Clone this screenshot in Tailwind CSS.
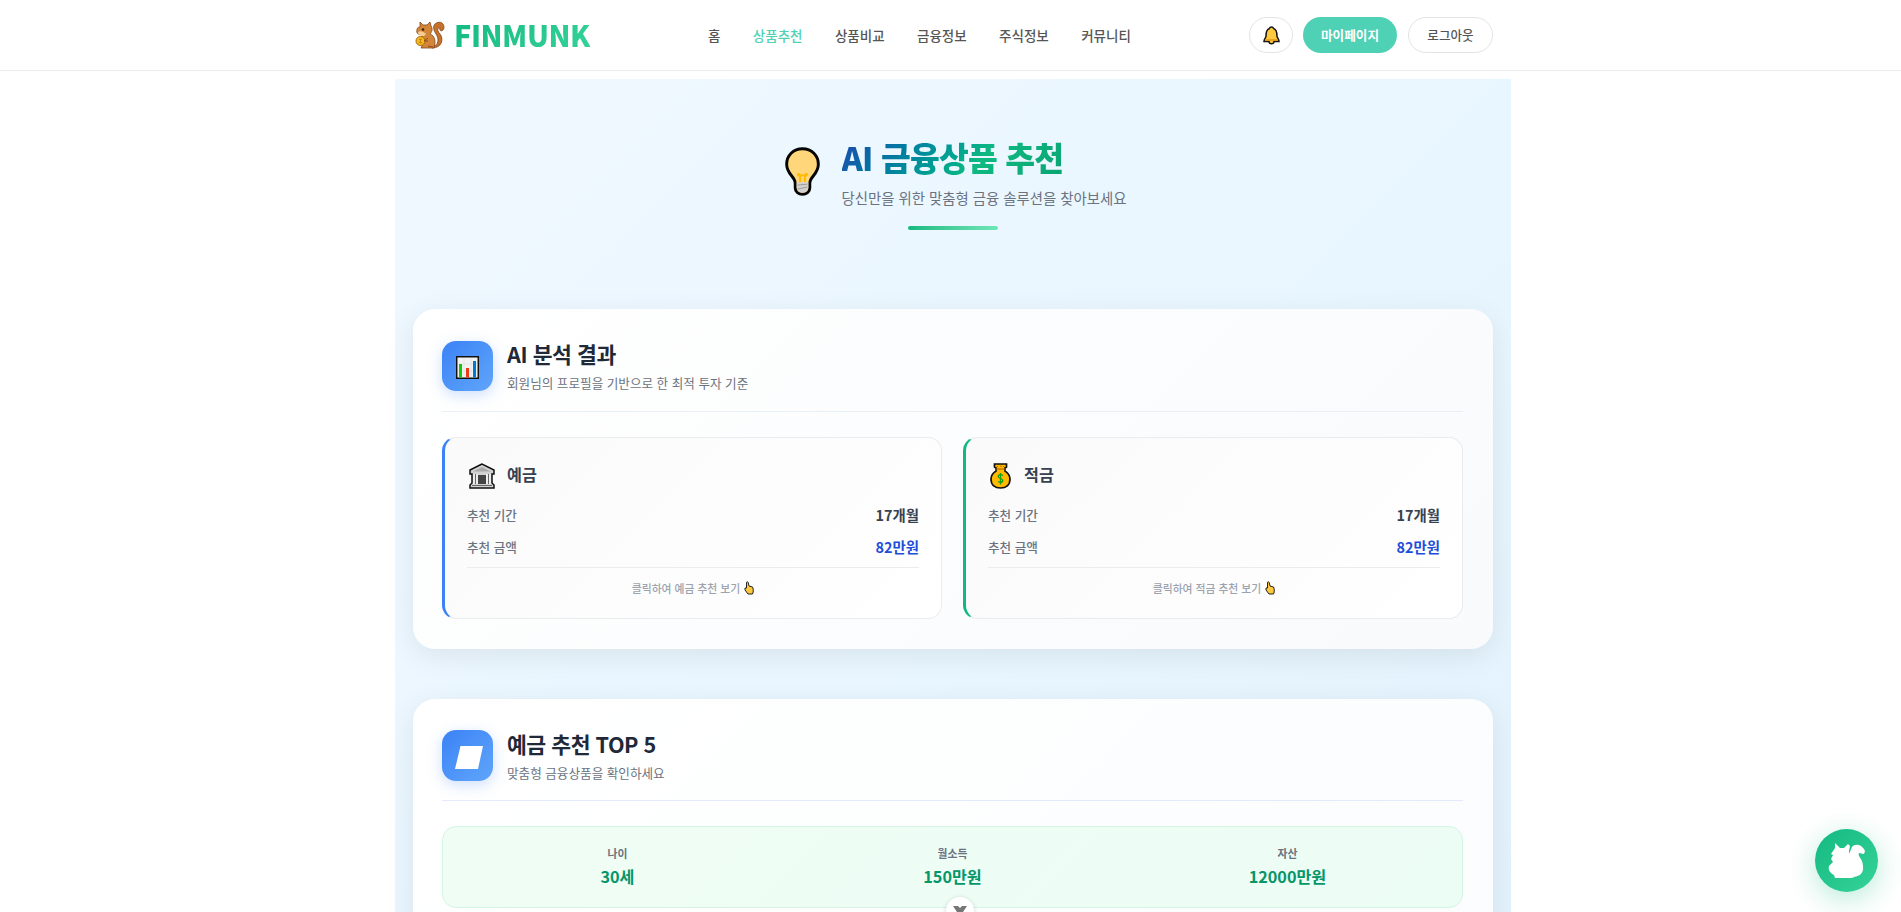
<!DOCTYPE html>
<html lang="ko">
<head>
<meta charset="utf-8">
<title>FINMUNK</title>
<script src="https://cdn.jsdelivr.net/npm/@tailwindcss/browser@4"></script>
</head>
<body class="bg-white font-['Noto_Sans_CJK_KR','Noto_Sans',sans-serif] text-[#1f2937]">
<div class="relative h-[912px] overflow-hidden">
<header class="h-[71px] border-b border-[#ebebeb] bg-white">
  <div class="ml-[413px] flex h-[70px] w-[1080px] items-center">
    <div class="flex w-[295px] shrink-0 items-center">
      <svg class="ml-[2px] h-[29px] w-[30px] shrink-0" viewBox="0 0 30 29">
        <path d="M18 25C24 25 24 17 21 13C17 7 18 2 24 1.200C29 1 30 7 28 9C26 11 24 9 25 7C22 6 22 10 25 13C29 18 27 27 17 27Z" fill="#c4722a" stroke="#80431b" stroke-width=".8"/>
        <path d="M5 6L5 1L8 4L12 4L15 1L16 5C18 8 17 11 15 13C20 15 21 20 19 27L6 27L8 23C5 20 6 17 8 14C3 14 1 12 2 9C2 7 3 6 5 6Z" fill="#d48638" stroke="#80431b" stroke-width=".8"/>
        <path d="M3 11C6 9 9 11 11 13L9 15C6 15 3 14 3 11Z" fill="#f6cc92"/><circle cx="8" cy="8.500" r="1.300" fill="#3b2114"/>
        <circle cx="5.500" cy="20" r="4.500" fill="#f4b820" stroke="#aa6b0b"/><path d="M5.500 17.500V22.500M4 18.500H7M4 21.500H7" stroke="#c88710"/>
        <path d="M13 17L9 20L13 20M13 25L18 26" fill="none" stroke="#8e4b1c"/>
      </svg>
      <span class="ml-[9px] bg-linear-135 from-[#10b981] to-[#34d399] bg-clip-text text-[28.8px] leading-[40px] font-extrabold tracking-[-0.450px] text-transparent">FINMUNK</span>
    </div>
    <nav class="flex w-[541px] shrink-0 gap-[32.400px] text-[13.500px] font-medium whitespace-nowrap text-[#555]">
      <span>홈</span><span class="text-[#4fd1b5]">상품추천</span><span>상품비교</span><span>금융정보</span><span>주식정보</span><span>커뮤니티</span>
    </nav>
    <div class="flex w-[244px] shrink-0 gap-[10px] text-[12.600px] font-medium whitespace-nowrap">
      <div class="flex h-9 w-11 shrink-0 items-center justify-center rounded-full border border-[#e3e3e3]">
        <svg class="h-[19px] w-[17px]" viewBox="0 0 17 19"><path d="M8.500 1C6.500 1 6.700 2 6.500 2.500C3 3.500 3 7 3 10C3 12 1 13 1 15.500H6C6 18.500 11 18.500 11 15.500H16C16 13 14 12 14 10C14 7 14 3.500 10.500 2.500C10.300 2 10.500 1 8.500 1Z" fill="#ffc83d" stroke="#151515" stroke-width="1.500"/><path d="M2 14H15" stroke="#e69719" stroke-width="1.500"/></svg>
      </div>
      <div class="flex h-9 w-[94px] shrink-0 items-center justify-center rounded-full bg-[#4fd1b5] font-bold text-white">마이페이지</div>
      <div class="ml-[1px] flex h-9 w-[85px] shrink-0 items-center justify-center rounded-full border border-[#e3e3e3] text-[#555]">로그아웃</div>
    </div>
  </div>
</header>

<main class="mt-2 ml-[395px] h-[1200px] w-[1116px] bg-linear-135 from-[#f0f8ff] via-[#e8f6ff] via-50% to-[#e0f0fa] px-[18px]">
  <section class="flex h-[230px] flex-col items-center pt-[55px]">
    <div class="flex h-[75px] items-center">
      <svg class="mr-[22px] ml-[6px] h-[49px] w-[35px]" viewBox="0 0 36 50"><path d="M18 1.600C8.500 1.600 1.700 8.500 1.700 17.500C1.700 28 10.500 30 10.500 37V42C10.500 46 14 48.400 18 48.400S25.500 46 25.500 42V37C25.500 30 34.300 28 34.300 17.500C34.300 8.500 27.500 1.600 18 1.600Z" fill="#ffd679" stroke="#050505" stroke-width="3"/><path d="M15.500 36V29M20.500 36V29M15.500 29.500C11.500 29 14 25.500 15.500 29H20.500C22 25.500 24.500 29 20.500 29.500" fill="none" stroke="#ffb900" stroke-width="2"/><path d="M12 36H24V42Q23 46 18 47Q13 46 12 42Z" fill="#d2d2d2"/><path d="M13 39L23 38M13 43L23 41" stroke="#999"/></svg>
      <div>
        <h1 class="w-[286px] bg-linear-135 from-[#1e40af] via-[#10b981] via-50% to-[#059669] bg-clip-text text-[32.400px] leading-[43px] font-extrabold tracking-[-0.800px] text-transparent">AI 금융상품 추천</h1>
        <p class="mt-[8px] text-[14.400px] leading-[23px] text-[#6b7280]">당신만을 위한 맞춤형 금융 솔루션을 찾아보세요</p>
      </div>
    </div>
    <div class="mt-[17px] h-1 w-[90px] rounded-sm bg-linear-to-r from-[#10b981] to-[#6ee7b7]"></div>
  </section>

  <section class="h-[340px] rounded-[22px] bg-linear-135 from-white to-[#f8fafc] pr-[30px] pl-[29px] pt-8 shadow-[0_7px_29px_rgba(0,0,0,0.08)]">
    <div class="flex h-[71px] items-start border-b border-[#e8eff5]">
      <div class="flex h-[50px] w-[51px] items-center justify-center rounded-[14px] bg-linear-135 from-[#3b82f6] to-[#60a5fa] shadow-[0_4px_14px_rgba(59,130,246,0.25)]">
        <svg class="mt-[3px] h-[23px] w-[23px]" viewBox="0 0 23 23"><path d="M.7.700H22.300V22.300H.7Z" fill="#f3f3f3" stroke="#111" stroke-width="1.500"/><path d="M2 8H21M2 15H21M8 2V21M15 2V21" stroke="#ddd" stroke-width=".6"/><path d="M3 8H6V21.500H3Z" fill="#16c60c"/><path d="M10 12H13V21.500H10Z" fill="#f03a17"/><path d="M17 5H20V21.500H17Z" fill="#0078d7"/></svg>
      </div>
      <div class="ml-[14px]"><h2 class="text-[21.600px] leading-[26px] font-bold tracking-[-0.450px]">AI 분석 결과</h2><p class="mt-[6px] text-[12.600px] leading-[20px] text-[#6b7280]">회원님의 프로필을 기반으로 한 최적 투자 기준</p></div>
    </div>
    <div class="mt-[25px] grid grid-cols-2 gap-[21px]">
      <article class="h-[182px] rounded-[14px] border border-l-3 border-[#ebecee] border-l-[#3b82f6] bg-linear-135 from-[#fafafa] to-white px-[22px] pt-[24px]">
        <div class="flex h-7 items-center">
          <svg class="ml-[2px] h-[26px] w-[26px]" viewBox="0 0 26 26"><path d="M13 1L1 7V11H3V20L1 22V25H25V22L23 20V11H25V7Z" fill="#d2d2d2" stroke="#111" stroke-width="1.500"/><path d="M4 8.500L13 4L22 8.500Z" fill="#aaa"/><path d="M9 12H17V21H9Z" fill="#444"/><path d="M5 11V21M8 11V21M18 11V21M21 11V21" stroke="#fff" stroke-width="1.200"/><path d="M6.500 11V21M19.500 11V21M3 22.500H23" stroke="#666"/></svg>
          <h3 class="mb-[3px] ml-[12px] text-[16.200px] font-bold text-[#374151]">예금</h3>
        </div>
        <div class="mt-[9px] flex h-8 items-center justify-between"><span class="text-[12.600px] font-medium text-[#6b7280]">추천 기간</span><b class="text-[14.400px] text-[#374151]">17개월</b></div>
        <div class="flex h-8 items-center justify-between"><span class="text-[12.600px] font-medium text-[#6b7280]">추천 금액</span><b class="text-[14.400px] text-[#1d4ed8]">82만원</b></div>
        <div class="mt-[4px] flex h-[41px] items-center justify-center border-t border-[#ebecee] text-[10.800px] font-medium text-[#9ca3af]">클릭하여 예금 추천 보기
          <svg class="ml-1 h-[14px] w-[10px]" viewBox="0 0 10 14"><path d="M2.500 7V1.500C2.500.5 4 .5 4.200 1.500L5 5L8.500 6L9.200 8V11L8.500 13H4L1 9V7Z" fill="#ffc83d" stroke="#222"/></svg>
        </div>
      </article>
      <article class="h-[182px] rounded-[14px] border border-l-3 border-[#ebecee] border-l-[#10b981] bg-linear-135 from-[#fafafa] to-white px-[22px] pt-[24px]">
        <div class="flex h-7 items-center">
          <svg class="ml-[2px] h-[26px] w-[21px]" viewBox="0 0 21 26"><path d="M4.500 1H16.500V4L15 5V8C18 10 20 12.500 20 16C20 22 16 25 10.500 25S1 22 1 16C1 12.500 3 10 6 8V5L4.500 4Z" fill="#ffb900" stroke="#111" stroke-width="1.700"/><path d="M5.500 6H15.500M7 3L8 4M11 2.500V4M14 3L13 4" stroke="#a65f00"/><path d="M13 12.500C9 10 6 14 10.500 15.500S12 21 8 18.500M10.500 10V21.500" fill="none" stroke="#16a010" stroke-width="1.300"/></svg>
          <h3 class="mb-[3px] ml-[13px] text-[16.200px] font-bold text-[#374151]">적금</h3>
        </div>
        <div class="mt-[9px] flex h-8 items-center justify-between"><span class="text-[12.600px] font-medium text-[#6b7280]">추천 기간</span><b class="text-[14.400px] text-[#374151]">17개월</b></div>
        <div class="flex h-8 items-center justify-between"><span class="text-[12.600px] font-medium text-[#6b7280]">추천 금액</span><b class="text-[14.400px] text-[#1d4ed8]">82만원</b></div>
        <div class="mt-[4px] flex h-[41px] items-center justify-center border-t border-[#ebecee] text-[10.800px] font-medium text-[#9ca3af]">클릭하여 적금 추천 보기
          <svg class="ml-1 h-[14px] w-[10px]" viewBox="0 0 10 14"><path d="M2.500 7V1.500C2.500.5 4 .5 4.200 1.500L5 5L8.500 6L9.200 8V11L8.500 13H4L1 9V7Z" fill="#ffc83d" stroke="#222"/></svg>
        </div>
      </article>
    </div>
  </section>

  <section class="mt-[50px] h-[500px] rounded-[22px] bg-linear-135 from-white to-[#fafcfd] pr-[30px] pl-[29px] pt-[31px] shadow-[0_7px_29px_rgba(0,0,0,0.08)]">
    <div class="flex h-[71px] items-start border-b border-[#e3ebfa]">
      <div class="flex h-[51px] w-[51px] items-center justify-center rounded-[14px] bg-linear-135 from-[#3b82f6] to-[#60a5fa] shadow-[0_4px_14px_rgba(59,130,246,0.25)]"><svg class="mt-[4px] ml-[3px] h-[23px] w-[28px]" viewBox="0 0 28 23"><path d="M5.500 0H28L23 23H0Z" fill="#fff"/></svg></div>
      <div class="ml-[14px]"><h2 class="text-[21.600px] leading-[28px] font-bold tracking-[-0.500px]">예금 추천 TOP 5</h2><p class="mt-[5px] text-[12.600px] leading-[20px] text-[#6b7280]">맞춤형 금융상품을 확인하세요</p></div>
    </div>
    <div class="mt-[25px] grid h-[82px] grid-cols-3 rounded-[14px] border border-[#d4f5e2] bg-linear-135 from-[#f0fdf4] to-[#ecfdf5] px-[7px] pt-[17px] text-center">
      <div><div class="text-[10.800px] leading-[18px] font-bold text-[#6b7280]">나이</div><b class="mt-[1px] block text-[16.200px] leading-[26px] text-[#059669]">30세</b></div>
      <div><div class="text-[10.800px] leading-[18px] font-bold text-[#6b7280]">월소득</div><b class="mt-[1px] block text-[16.200px] leading-[26px] text-[#059669]">150만원</b></div>
      <div><div class="text-[10.800px] leading-[18px] font-bold text-[#6b7280]">자산</div><b class="mt-[1px] block text-[16.200px] leading-[26px] text-[#059669]">12000만원</b></div>
    </div>
  </section>
</main>

<div class="absolute top-[897px] left-[946px] flex h-7 w-7 justify-center rounded-full bg-white pt-[9px] shadow-[0_1px_5px_rgba(0,0,0,0.18)]"><svg class="h-[12px] w-[14px]" viewBox="0 0 14 12"><path d="M0 0H5L7 2L9 0H14L10 6H4Z" fill="#777"/></svg></div>
<div class="absolute top-[829px] left-[1815px] flex h-[63px] w-[63px] items-center justify-center rounded-full bg-linear-135 from-[#10b981] to-[#34d399] shadow-[0_7px_29px_rgba(16,185,129,0.3)]">
  <svg class="h-[37px] w-[37px]" viewBox="0 0 37 37"><path d="M7 1L11 5L12 6H16L20 2L22 4L21 9V12L24 5C27 1 34 2 37 9L36 12L31 11C29 14 35 17 35 24C36 31 32 34 26 35L24 36H7L6 33C2 31 0 28 1 24L5 20L3 17L5 13L3 12L7 6Z" fill="#fff"/></svg>
</div>
</div>
</body>
</html>
